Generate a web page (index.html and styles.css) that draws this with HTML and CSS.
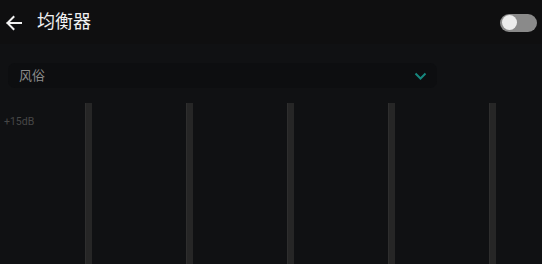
FILE: index.html
```html
<!DOCTYPE html>
<html lang="zh">
<head>
<meta charset="utf-8">
<link rel="stylesheet" href="styles.css">
</head>
<body>
<div class="page">
  <header class="header">
    <svg class="back" width="18" height="16" viewBox="0 0 18 16">
      <path d="M16 8H2.5M8.5 2L2.5 8l6 6" fill="none" stroke="#f2f2f2" stroke-width="2" stroke-linecap="square"/>
    </svg>
    <h1 class="title">均衡器</h1>
    <div class="toggle"><span class="knob"></span></div>
  </header>
  <div class="select">
    <span class="select-label">风俗</span>
    <svg class="chev" width="13" height="8" viewBox="0 0 13 8">
      <path d="M1.5 1.5l5 5 5-5" fill="none" stroke="#17877e" stroke-width="2"/>
    </svg>
  </div>
  <div class="eq">
    <div class="scale">+15dB</div>
    <div class="bars">
      <div class="bar"></div>
      <div class="bar"></div>
      <div class="bar"></div>
      <div class="bar"></div>
      <div class="bar"></div>
    </div>
  </div>
</div>
</body>
</html>
```
FILE: styles.css
```css
html, body {
  margin: 0;
  padding: 0;
  background: #101113;
  overflow: hidden;
}
.page {
  width: 542px;
  height: 264px;
  font-family: "Noto Sans CJK SC", "Noto Sans", sans-serif;
  display: flex;
  flex-direction: column;
}
.header {
  height: 44px;
  display: flex;
  align-items: center;
  padding: 0 4px 0 4px;
  background: #0f0f10;
}
.back {
  margin-left: 1px;
  margin-top: 1px;
}
.title {
  margin: 0 0 4px 14px;
  font-size: 18px;
  font-weight: 400;
  color: #f0f0f0;
  flex: 1;
  line-height: 24px;
}
.toggle {
  width: 37px;
  height: 18px;
  border-radius: 9px;
  background: #8a8a8a;
  display: flex;
  align-items: center;
  padding-left: 2px;
  box-sizing: border-box;
  margin-right: 1px;
  margin-top: 1px;
}
.knob {
  width: 15px;
  height: 15px;
  border-radius: 50%;
  background: #ececec;
}
.select {
  margin: 19px 0 0 8px;
  width: 429px;
  height: 25px;
  border-radius: 7px;
  background: #0d0e10;
  display: flex;
  align-items: center;
  justify-content: space-between;
  padding: 0 10px 2px 11px;
  box-sizing: border-box;
}
.select-label {
  font-size: 13px;
  color: #8a8a8a;
  line-height: 16px;
}
.chev {
  margin-top: 2px;
}
.eq {
  display: flex;
  margin-top: 15px;
  flex: 1;
}
.scale {
  width: 85px;
  padding-left: 4px;
  box-sizing: border-box;
  font-family: "Roboto", sans-serif;
  font-size: 10.5px;
  color: #474747;
  padding-top: 12px;
}
.bars {
  display: flex;
  gap: 94px;
}
.bar {
  width: 7px;
  background: #262626;
  border-left: 1px solid #2e2e2e;
  box-sizing: border-box;
}
```
